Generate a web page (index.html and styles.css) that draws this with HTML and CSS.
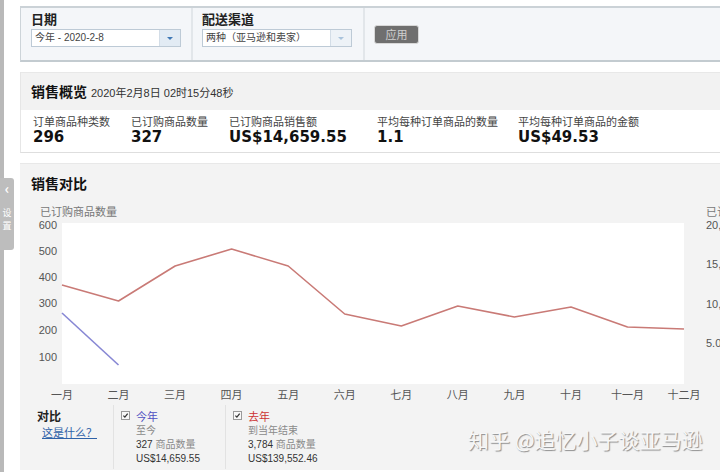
FILE: index.html
```html
<!DOCTYPE html>
<html lang="zh-CN">
<head>
<meta charset="utf-8">
<title>销售概览</title>
<link rel="stylesheet" href="styles.css">
</head>
<body>
<div class="stripe"></div>
<div class="side-tab"><span class="tab-arrow">‹</span><span class="tab-text">设</span><span class="tab-text">置</span></div>
<div class="main">
  <div class="filters">
    <div class="fsec fsec1">
      <div class="flabel">日期</div>
      <div class="select"><span class="select-text">今年 - 2020-2-8</span><span class="select-btn"><i class="caret"></i></span></div>
    </div>
    <div class="fsec fsec2">
      <div class="flabel">配送渠道</div>
      <div class="select"><span class="select-text">两种（亚马逊和卖家）</span><span class="select-btn light"><i class="caret"></i></span></div>
    </div>
    <div class="fsec3">
      <div class="apply">应用</div>
    </div>
  </div>

  <div class="overview">
    <div class="ov-head"><span class="ov-title">销售概览</span><span class="ov-date">2020年2月8日 02时15分48秒</span></div>
    <div class="metrics">
      <div class="metric"><div class="m-label">订单商品种类数</div><div class="m-value">296</div></div>
      <div class="metric"><div class="m-label">已订购商品数量</div><div class="m-value">327</div></div>
      <div class="metric"><div class="m-label">已订购商品销售额</div><div class="m-value">US$14,659.55</div></div>
      <div class="metric"><div class="m-label">平均每种订单商品的数量</div><div class="m-value">1.1</div></div>
      <div class="metric"><div class="m-label">平均每种订单商品的金额</div><div class="m-value">US$49.53</div></div>
    </div>
  </div>

  <div class="compare">
    <div class="cmp-title">销售对比</div>
    <svg class="chart" width="700" height="200" viewBox="20 203 700 200">
      <text x="40" y="216" class="ax-title">已订购商品数量</text>
      <text x="706" y="216" class="ax-title">已订购商品销售额</text>
      <rect x="62" y="223" width="622" height="161" class="plot"/>
      <g class="ylab">
        <text x="57" y="229">600</text>
        <text x="57" y="255">500</text>
        <text x="57" y="281">400</text>
        <text x="57" y="307">300</text>
        <text x="57" y="334">200</text>
        <text x="57" y="361">100</text>
      </g>
      <g class="ylab-r">
        <text x="706" y="229">20,000</text>
        <text x="706" y="268">15,000</text>
        <text x="706" y="308">10,000</text>
        <text x="706" y="347">5.000</text>
      </g>
      <g class="xlab">
        <text x="62" y="399">一月</text>
        <text x="118.5" y="399">二月</text>
        <text x="175.1" y="399">三月</text>
        <text x="231.6" y="399">四月</text>
        <text x="288.2" y="399">五月</text>
        <text x="344.7" y="399">六月</text>
        <text x="401.3" y="399">七月</text>
        <text x="457.8" y="399">八月</text>
        <text x="514.4" y="399">九月</text>
        <text x="571" y="399">十月</text>
        <text x="627.5" y="399">十一月</text>
        <text x="684" y="399">十二月</text>
      </g>
      <polyline class="line-last" points="62,285 118.5,301 175.1,266 231.6,249 288.2,266 344.7,314 401.3,326 457.8,306 514.4,317 571,307 627.5,327 684,329"/>
      <polyline class="line-this" points="62,313 118.5,365"/>
    </svg>
    <div class="legend">
      <div class="lg-col1">
        <div class="lg-title">对比</div>
        <a class="lg-link">这是什么？</a>
      </div>
      <div class="lg-col">
        <span class="checkbox"><svg width="9" height="9" viewBox="0 0 9 9"><path d="M1.8 4.6 L3.7 6.6 L7.3 2" fill="none" stroke="#333" stroke-width="1.6"/></svg></span>
        <div class="lg-text">
          <div class="lg-name blue">今年</div>
          <div class="lg-sub">至今</div>
          <div class="lg-num">327 <span class="lg-sub">商品数量</span></div>
          <div class="lg-num">US$14,659.55</div>
        </div>
      </div>
      <div class="lg-col">
        <span class="checkbox"><svg width="9" height="9" viewBox="0 0 9 9"><path d="M1.8 4.6 L3.7 6.6 L7.3 2" fill="none" stroke="#333" stroke-width="1.6"/></svg></span>
        <div class="lg-text">
          <div class="lg-name red">去年</div>
          <div class="lg-sub">到当年结束</div>
          <div class="lg-num">3,784 <span class="lg-sub">商品数量</span></div>
          <div class="lg-num">US$139,552.46</div>
        </div>
      </div>
    </div>
  </div>
</div>
<div class="watermark">知乎 @追忆小子谈亚马逊</div>
</body>
</html>
```

FILE: styles.css
```css
* { box-sizing: border-box; margin: 0; padding: 0; }
body {
  margin: 0;
  width: 720px;
  height: 472px;
  overflow: hidden;
  background: #fff;
  font-family: "Liberation Sans", "Noto Sans CJK SC", sans-serif;
  color: #333;
  display: flex;
  position: relative;
}
.stripe { width: 4px; flex: none; background: #b9b9b9; }
.side-tab {
  position: absolute;
  left: 0;
  top: 178px;
  width: 14px;
  height: 72px;
  background: #bdbdbd;
  border-radius: 0 3px 3px 0;
  color: #fff;
  display: flex;
  flex-direction: column;
  align-items: center;
  font-family: "Noto Sans CJK SC", sans-serif;
}
.tab-arrow { font-size: 14px; line-height: 16px; font-weight: bold; margin-top: 2px; margin-bottom: 10px; }
.tab-text { font-size: 9px; line-height: 13px; height: 13px; overflow: hidden; }

.main { flex: 1; min-width: 0; padding: 6px 0 0 16px; display: flex; flex-direction: column; }

/* filters */
.filters {
  display: flex;
  height: 56px;
  background: #f4f6f9;
  border-top: 2px solid #cbd2d7;
  border-bottom: 2px solid #c3cbd0;
  border-left: 1px solid #cdd4d9;
}
.fsec { width: 172px; padding-top: 3px; border-right: 2px solid #e2e6ea; }
.fsec1 { padding-left: 10px; }
.fsec2 { padding-left: 9px; }
.flabel { font: bold 13px/16px "Noto Sans CJK SC", sans-serif; color: #222; }
.select {
  margin-top: 2px;
  width: 150px;
  height: 18px;
  display: flex;
  border: 1px solid #bdcad6;
  background: #fff;
}
.select-text { flex: 1; font-size: 10px; line-height: 16px; padding-left: 3px; color: #444; white-space: nowrap; overflow: hidden; }
.select-btn {
  width: 21px;
  border-left: 1px solid #d3dde7;
  background: #e2ebf4;
  display: flex;
  align-items: center;
  justify-content: center;
}
.select-btn.light { background: #edf2f7; }
.caret {
  width: 0; height: 0;
  border-left: 3px solid transparent;
  border-right: 3px solid transparent;
  border-top: 3px solid #3f78b5;
}
.select-btn.light .caret { border-top-color: #a9c3dc; }
.fsec3 { flex: 1; padding: 17px 0 0 9px; }
.apply {
  width: 45px;
  height: 19px;
  background: #6f6f6f;
  color: #cfcfcf;
  border: 1px solid #d8d8d8;
  border-radius: 3px;
  font: 11px/17px "Noto Sans CJK SC", sans-serif;
  text-align: center;
}

/* overview */
.overview { margin-top: 10px; border-left: 1px solid #e6e6e6; border-bottom: 1px solid #dedede; }
.ov-head {
  height: 38px;
  background: #f2f2f2;
  border-top: 1px solid #e8e8e8;
  padding: 8px 0 0 10px;
  display: flex;
  align-items: baseline;
}
.ov-title { font: bold 14px/20px "Noto Sans CJK SC", sans-serif; color: #111; }
.ov-date { font-size: 11px; color: #333; margin-left: 4px; }
.metrics {
  display: grid;
  grid-template-columns: 98px 98px 148px 141px 1fr;
  height: 42px;
  padding: 5px 0 0 12px;
  background: #fff;
}
.m-label { font-size: 11px; line-height: 14px; color: #444; white-space: nowrap; }
.m-value { font: bold 15px/17px "DejaVu Sans", sans-serif; color: #111; white-space: nowrap; }

/* compare */
.compare { margin-top: 10px; background: #f3f3f3; height: 307px; border-top: 1px solid #e8e8e8; }
.cmp-title { font: bold 14px/20px "Noto Sans CJK SC", sans-serif; color: #111; padding: 9px 0 0 11px; }
.chart { display: block; margin-top: 10px; overflow: hidden; }
.ax-title { font-size: 11px; fill: #777; font-family: "Noto Sans CJK SC", sans-serif; }
.plot { fill: #fff; }
.ylab text { font-size: 11px; fill: #555; text-anchor: end; font-family: "Liberation Sans", sans-serif; }
.ylab-r text { font-size: 11px; fill: #555; font-family: "Liberation Sans", sans-serif; }
.xlab text { font-size: 11px; fill: #555; text-anchor: middle; font-family: "Noto Sans CJK SC", sans-serif; }
.line-last { fill: none; stroke: #c97a76; stroke-width: 1.6; stroke-linejoin: round; }
.line-this { fill: none; stroke: #8787d4; stroke-width: 1.6; }

.legend { display: flex; height: 64px; margin-top: 2px; }
.lg-col1 { width: 93px; padding: 4px 0 0 17px; display: flex; flex-direction: column; align-items: flex-start; }
.lg-title { font: bold 12px/14px "Noto Sans CJK SC", sans-serif; color: #222; }
.lg-link { margin: 4px 0 0 5px; font-size: 11px; line-height: 13px; color: #2f62a8; text-decoration: underline; }
.lg-col { width: 112px; border-left: 1px solid #e2e2e2; display: flex; gap: 6px; padding: 5px 0 0 7px; }
.checkbox {
  width: 9px; height: 9px; flex: none;
  margin-top: 1px;
  border: 1px solid #9a9a9a;
  background: #f8f8f8;
  display: flex;
  align-items: center;
  justify-content: center;
}
.checkbox svg { display: block; }
.lg-text { display: flex; flex-direction: column; }
.lg-name { font-size: 11px; line-height: 14px; }
.lg-name.blue { color: #4f4fc2; }
.lg-name.red { color: #cc3434; }
.lg-sub { font-size: 10px; line-height: 14px; color: #8a8a8a; }
.lg-num { font-size: 10px; line-height: 13px; color: #333; white-space: nowrap; }

.watermark {
  position: absolute;
  left: 468px;
  top: 425px;
  font: 21px/28px "Noto Sans CJK SC", sans-serif;
  color: #f7f7f7;
  text-shadow: 1px 1px 1px #8c8c8c;
  white-space: nowrap;
}
```
